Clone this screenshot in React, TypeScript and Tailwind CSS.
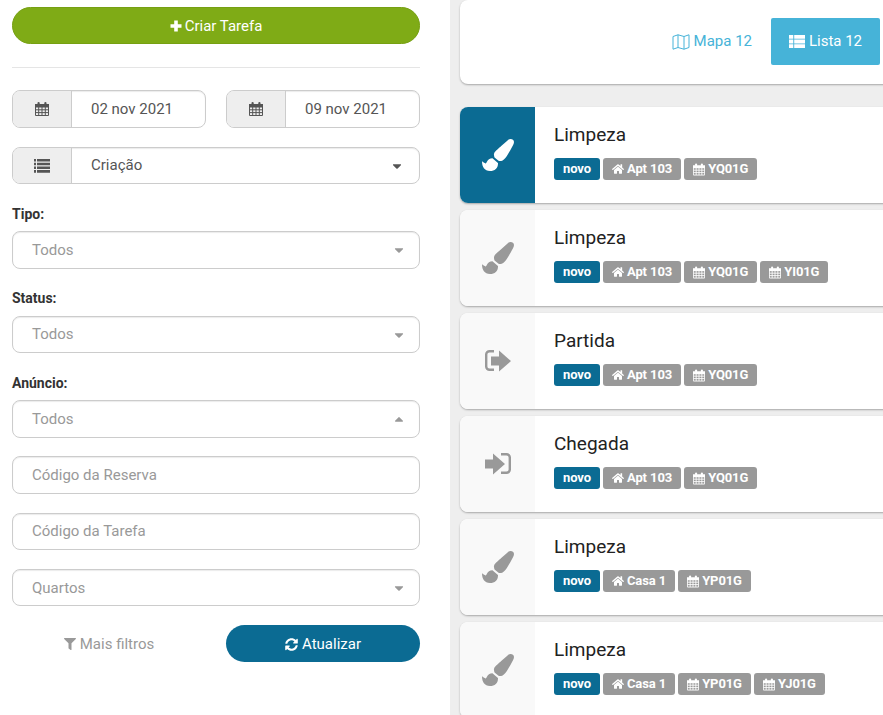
import { FaCaretDown, FaCaretUp, FaFilter, FaHome, FaPaintBrush, FaSyncAlt } from 'react-icons/fa';
import type { ReactNode } from 'react';

const tasks = [
  { title: 'Limpeza', icon: 'brush', place: 'Apt 103', codes: ['YQ01G'], active: true },
  { title: 'Limpeza', icon: 'brush', place: 'Apt 103', codes: ['YQ01G', 'YI01G'] },
  { title: 'Partida', icon: 'out', place: 'Apt 103', codes: ['YQ01G'] },
  { title: 'Chegada', icon: 'in', place: 'Apt 103', codes: ['YQ01G'] },
  { title: 'Limpeza', icon: 'brush', place: 'Casa 1', codes: ['YP01G'] },
  { title: 'Limpeza', icon: 'brush', place: 'Casa 1', codes: ['YP01G', 'YJ01G'] },
];

// font-awesome 4 look, the packaged ones are too heavy
function CalendarIcon({ className }: { className?: string }) {
  return (
    <svg viewBox="0 0 14 14" className={className} fill="currentColor">
      <rect x="2.5" y="0" width="2.2" height="4" rx="1" />
      <rect x="9.300" y="0" width="2.2" height="4" rx="1" />
      <path d="M0 2h14v3.400H0z" />
      <path
        d="M.5 5v8.500h13V5M.5 7.800h13M.5 10.600h13M3.700 5v8.500M7 5v8.500M10.300 5v8.500"
        fill="none"
        stroke="currentColor"
        strokeWidth="1"
      />
    </svg>
  );
}

function ListIcon() {
  return (
    <svg viewBox="0 0 16 14" className="w-[16px] h-[14px]" fill="currentColor">
      <path d="M0 0h2v2.600H0zM3 0h13v2.600H3zM0 3.700h2v2.600H0zM3 3.700h13v2.600H3zM0 7.400h2V10H0zM3 7.400h13V10H3zM0 11.100h2v2.600H0zM3 11.100h13v2.600H3z" />
    </svg>
  );
}

function PlusIcon() {
  return (
    <svg viewBox="0 0 12 12" className="w-[12px] h-[12px]" fill="currentColor">
      <path d="M4.200 0.500h3.600v3.700h3.700v3.600H7.800v3.700H4.200V7.800H.5V4.200h3.700z" />
    </svg>
  );
}

function MapIcon() {
  return (
    <svg viewBox="0 0 18 16" className="w-[18px] h-[16px]" fill="none" stroke="currentColor" strokeWidth="1">
      <path d="M1 2.500 6 .8l6 1.700L17 .8v12.700l-5 1.700-6-1.700-5 1.700zM6 .8v12.700M12 2.500v12.700" />
    </svg>
  );
}

function ThListIcon() {
  return (
    <svg viewBox="0 0 16 13" className="w-[16px] h-[13px]" fill="currentColor">
      <path d="M0 0h4.300v3.700H0zM5.200 0H16v3.700H5.200zM0 4.600h4.300v3.800H0zM5.200 4.600H16v3.800H5.200zM0 9.300h4.300V13H0zM5.200 9.300H16V13H5.200z" />
    </svg>
  );
}

function SignOutIcon() {
  return (
    <svg viewBox="0 0 26 22" className="w-[26px] h-[22px]" fill="currentColor">
      <path d="M9 1.200H4.500A3.300 3.300 0 0 0 1.200 4.500v12a3.300 3.300 0 0 0 3.300 3.300H9" fill="none" stroke="currentColor" strokeWidth="2.400" />
      <path d="M6 6.500h8V.5L26 11 14 21.500v-6H6z" />
    </svg>
  );
}

function SignInIcon() {
  return (
    <svg viewBox="0 0 26 22" className="w-[26px] h-[22px]" fill="currentColor">
      <path d="M16 1.200h5.500a3.300 3.300 0 0 1 3.300 3.300v12a3.300 3.300 0 0 1-3.300 3.300H16" fill="none" stroke="currentColor" strokeWidth="2.400" />
      <path d="M0 6.500h8V.5L20 11 8 21.500v-6H0z" />
    </svg>
  );
}

function AddonField({ icon, children, className }: { icon: ReactNode; children: ReactNode; className: string }) {
  return (
    <div className={`flex border border-[#ccc] rounded-[8px] overflow-hidden shadow-[inset_0_1px_1px_rgba(0,0,0,0.08)] ${className}`}>
      <div className="w-[59px] shrink-0 flex items-center justify-center bg-[#eee] border-r border-[#ccc] text-[#555]">{icon}</div>
      <div className="flex-1 flex items-center justify-between pl-[19px] pr-[15px] text-[#555] text-[15px]">{children}</div>
    </div>
  );
}

function SelectField({ label, up, className }: { label: string; up?: boolean; className: string }) {
  return (
    <div className={`flex items-center justify-between border border-[#ccc] rounded-[8px] pl-[19px] pr-[13px] text-[#999] text-[15px] shadow-[inset_0_1px_1px_rgba(0,0,0,0.08)] ${className}`}>
      <span>{label}</span>
      {up ? <FaCaretUp className="text-[14px]" /> : <FaCaretDown className="text-[14px]" />}
    </div>
  );
}

function Badge({ children, blue }: { children: ReactNode; blue?: boolean }) {
  return (
    <span className={`inline-flex items-center gap-[3px] h-[22px] px-[9px] rounded-[3px] text-white text-[13px] font-bold tracking-[-0.1px] ${blue ? 'bg-[#0b6b93]' : 'bg-[#999]'}`}>
      {children}
    </span>
  );
}

function TaskIcon({ name }: { name: string }) {
  if (name === 'out') return <SignOutIcon />;
  if (name === 'in') return <SignInIcon />;
  return <FaPaintBrush className="text-[32px]" />;
}

export default function App() {
  return (
    <div className="w-[883px] h-[715px] overflow-hidden flex bg-[#eee] font-['Roboto',sans-serif]">
      {/* filtros */}
      <aside className="w-[450px] shrink-0 bg-white pl-3 pr-[30px] pt-[7px]">
        <button className="w-full h-[37px] pt-[1px] flex items-center justify-center gap-[3px] rounded-full bg-[#7fab16] border border-[#76a012] text-white text-[15px]">
          <PlusIcon /> Criar Tarefa
        </button>
        <hr className="mt-[23px] border-[#e5e5e5]" />
        <div className="flex gap-[20px] mt-[22px]">
          <AddonField className="w-[194px] h-[38px]" icon={<CalendarIcon className="w-[14px] h-[14px]" />}>02 nov 2021</AddonField>
          <AddonField className="w-[194px] h-[38px]" icon={<CalendarIcon className="w-[14px] h-[14px]" />}>09 nov 2021</AddonField>
        </div>
        <AddonField className="mt-[19px] h-[37px]" icon={<ListIcon />}>
          <span>Criação</span>
          <FaCaretDown className="text-[14px]" />
        </AddonField>

        <label className="block mt-[20px] h-[20px] leading-[20px] text-[14px] font-bold text-[#333]">Tipo:</label>
        <SelectField className="mt-[7px] h-[38px]" label="Todos" />
        <label className="block mt-[19px] h-[20px] leading-[20px] text-[14px] font-bold text-[#333]">Status:</label>
        <SelectField className="mt-[8px] h-[37px]" label="Todos" />
        <label className="block mt-[20px] h-[20px] leading-[20px] text-[14px] font-bold text-[#333]">Anúncio:</label>
        <SelectField className="mt-[7px] h-[38px]" label="Todos" up />

        <div className="mt-[18px] h-[38px] flex items-center border border-[#ccc] rounded-[8px] pl-[19px] text-[#999] text-[15px] shadow-[inset_0_1px_1px_rgba(0,0,0,0.08)]">Código da Reserva</div>
        <div className="mt-[19px] h-[37px] flex items-center border border-[#ccc] rounded-[8px] pl-[19px] text-[#999] text-[15px] shadow-[inset_0_1px_1px_rgba(0,0,0,0.08)]">Código da Tarefa</div>
        <SelectField className="mt-[19px] h-[37px] pt-[1px]" label="Quartos" />

        <div className="flex gap-[20px] mt-[19px]">
          <button className="w-[194px] h-[37px] pt-[1px] flex items-center justify-center gap-[4px] text-[#999] text-[15px]">
            <FaFilter className="text-[12px]" /> Mais filtros
          </button>
          <button className="w-[194px] h-[37px] pt-[1px] flex items-center justify-center gap-[4px] rounded-full bg-[#0b6b93] text-white text-[15px]">
            <FaSyncAlt className="text-[13px]" /> Atualizar
          </button>
        </div>
      </aside>

      {/* lista */}
      <main className="flex-1 pl-[10px] min-w-0">
        <div className="-mr-4 h-[84px] bg-white rounded-[8px] shadow-[0_1px_2px_rgba(0,0,0,0.3)] flex items-start justify-end pt-[18px] pr-[19px]">
          <a className="h-[47px] flex items-center gap-[4px] px-[19px] text-[#46b3d8] text-[15px]">
            <MapIcon /> Mapa 12
          </a>
          <a className="w-[109px] h-[47px] flex items-center justify-center gap-[4px] rounded-[2px] bg-[#46b3d8] text-white text-[15px]">
            <ThListIcon /> Lista 12
          </a>
        </div>
        <div className="flex flex-col gap-[7px] mt-[23px]">
          {tasks.map((task, i) => (
            <div key={i} className="-mr-4 h-[96px] flex bg-white rounded-[8px] overflow-hidden shadow-[0_1px_2px_rgba(0,0,0,0.3)]">
              <div className={`w-[75px] shrink-0 flex items-center justify-center ${task.active ? 'bg-[#0b6b93] text-white' : 'bg-[#f9f9f9] text-[#999]'}`}>
                <TaskIcon name={task.icon} />
              </div>
              <div className="pl-[19px] pt-[15px]">
                <h3 className="text-[19px] leading-[26px] font-normal text-[#222]">{task.title}</h3>
                <div className="flex gap-[3px] mt-[10px]">
                  <Badge blue>novo</Badge>
                  <Badge><FaHome className="text-[12px]" />{task.place}</Badge>
                  {task.codes.map((code) => (
                    <Badge key={code}><CalendarIcon className="w-[12px] h-[13px]" />{code}</Badge>
                  ))}
                </div>
              </div>
            </div>
          ))}
        </div>
      </main>
    </div>
  );
}
